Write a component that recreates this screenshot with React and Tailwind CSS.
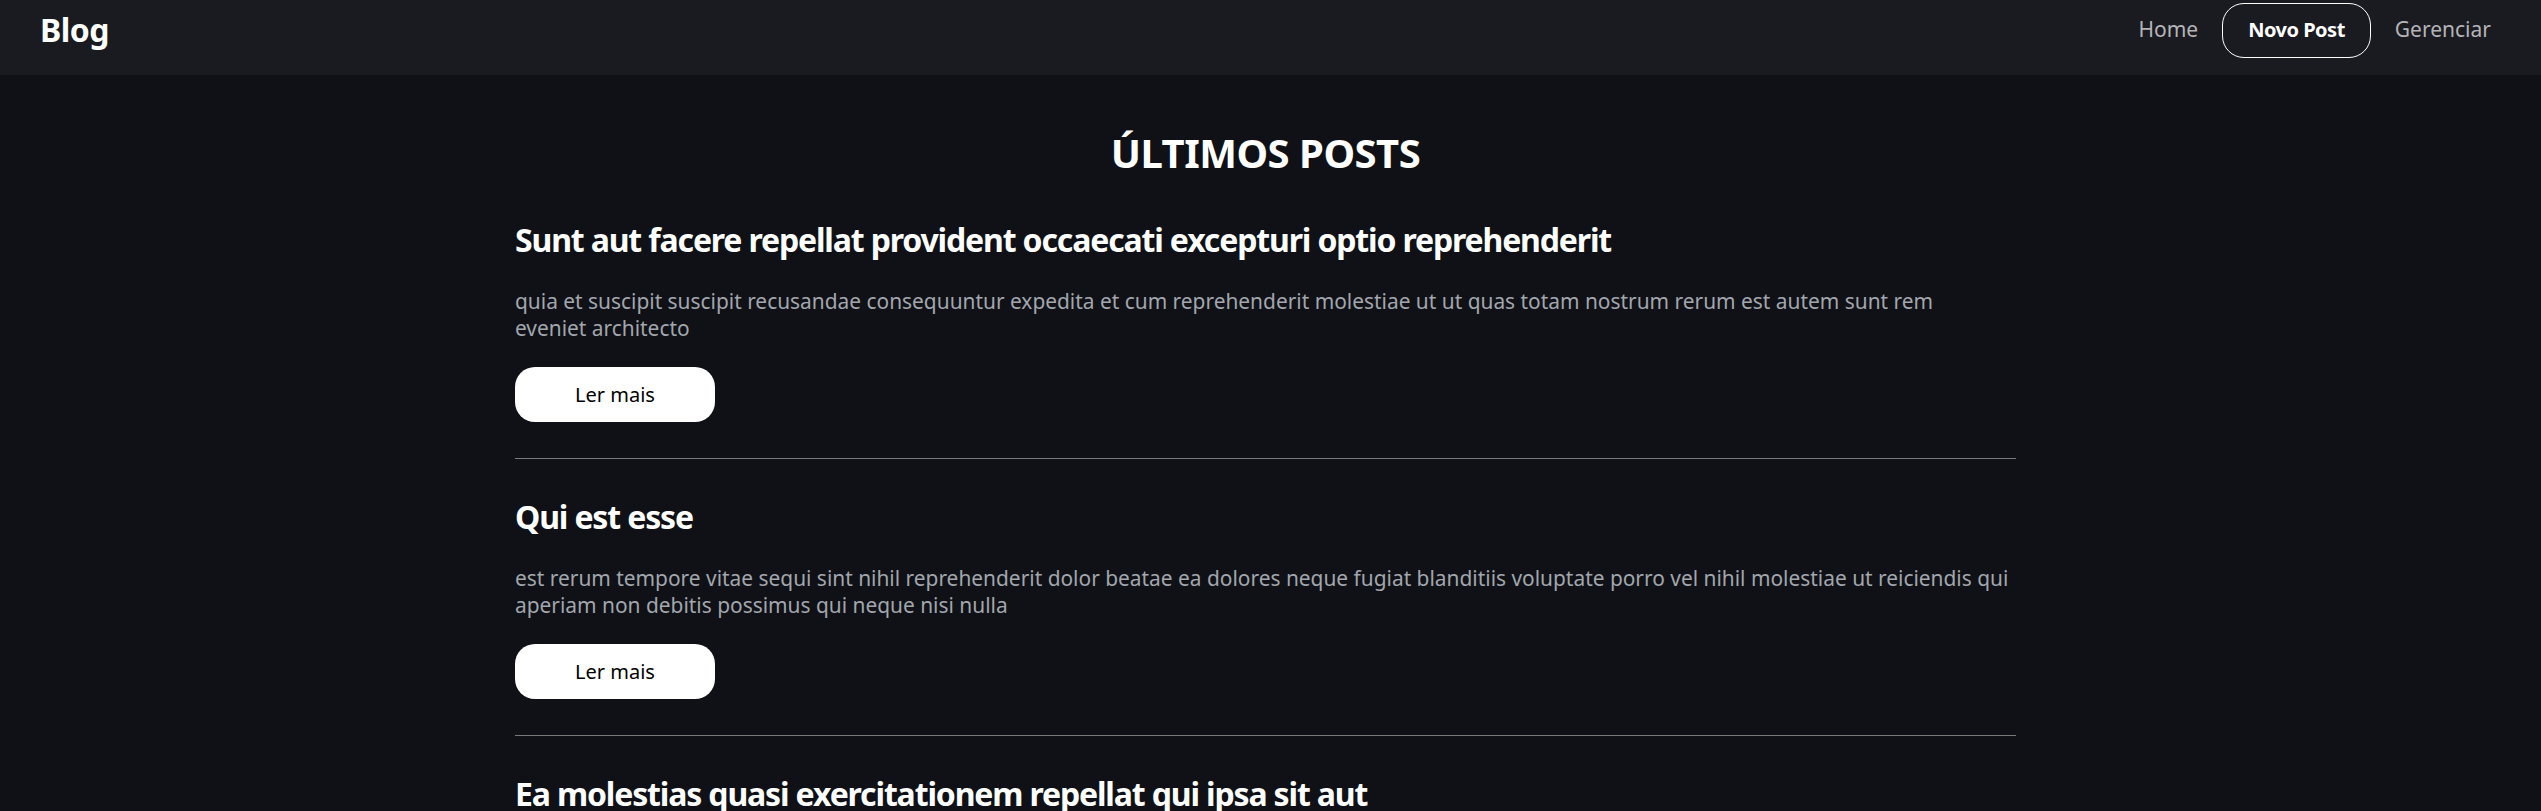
import React from "react";

// body split the way the lines wrap on screen
const posts = [
  {
    id: 1,
    title: "Sunt aut facere repellat provident occaecati excepturi optio reprehenderit",
    body: [
      "quia et suscipit suscipit recusandae consequuntur expedita et cum reprehenderit molestiae ut ut quas totam nostrum rerum est autem sunt rem",
      "eveniet architecto",
    ],
  },
  {
    id: 2,
    title: "Qui est esse",
    body: [
      "est rerum tempore vitae sequi sint nihil reprehenderit dolor beatae ea dolores neque fugiat blanditiis voluptate porro vel nihil molestiae ut reiciendis qui",
      "aperiam non debitis possimus qui neque nisi nulla",
    ],
  },
  {
    id: 3,
    title: "Ea molestias quasi exercitationem repellat qui ipsa sit aut",
    body: [
      "et iusto sed quo iure voluptatem occaecati omnis eligendi aut ad voluptatem doloribus vel accusantium quis pariatur molestiae porro eius odio et labore",
      "et velit aut",
    ],
  },
  {
    id: 4,
    title: "Eum et est occaecati",
    body: [
      "ullam et saepe reiciendis voluptatem adipisci sit amet autem assumenda provident rerum culpa quis hic commodi nesciunt rem tenetur doloremque ipsam iure",
      "quis sunt voluptatem rerum illo velit",
    ],
  },
];

function Header() {
  return (
    <header className="h-[75px] bg-[#1a1b20] pl-10 pr-[50px] flex items-start justify-between">
      <div className="h-[60px] flex items-center">
        <span className="text-[32px] font-bold text-white tracking-[-0.5px]">Blog</span>
      </div>
      <nav className="h-[60px] flex items-center gap-6 text-[21px]">
        <a className="text-[#b4b4b8]">Home</a>
        <a className="h-[55px] px-[25px] flex items-center border border-white rounded-[22px] text-[20px] text-white font-bold tracking-[-0.5px]">
          Novo Post
        </a>
        <a className="text-[#b4b4b8]">Gerenciar</a>
      </nav>
    </header>
  );
}

function PostItem({ post }) {
  return (
    <article>
      <h2 className="text-[32px] leading-[40px] font-bold text-white mb-[28px] tracking-[-1.15px]">
        {post.title}
      </h2>
      <p className="text-[20.9px] leading-[27px] text-[#a2a6ad] mb-[25px]">
        {post.body.map((line, i) => (
          <span key={i} className="block whitespace-nowrap">
            {line}
          </span>
        ))}
      </p>
      <button className="w-[200px] h-[55px] bg-white rounded-[20px] text-black text-[20px]">
        Ler mais
      </button>
      <hr className="mt-[36px] mb-[38px] border-0 border-t border-[#7a7a7a]" />
    </article>
  );
}

export default function App() {
  return (
    <div className="min-h-screen bg-[#0f1116] font-['Noto_Sans','DejaVu_Sans',sans-serif]">
      <Header />
      <div className="pr-[10px]">
        <main className="max-w-[1501px] mx-auto">
          <h1 className="mt-[54px] mb-[43px] text-center text-[40px] leading-[48px] font-bold text-white tracking-[-0.5px]">
            ÚLTIMOS POSTS
          </h1>
          {posts.map((post) => (
            <PostItem key={post.id} post={post} />
          ))}
        </main>
      </div>
    </div>
  );
}
